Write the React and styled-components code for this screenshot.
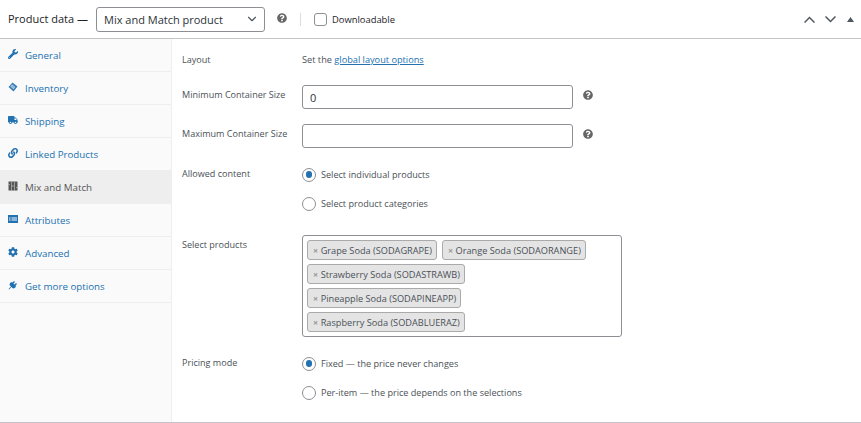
import React from 'react'
import styled, { createGlobalStyle } from 'styled-components'
import { FaWrench, FaTruck, FaLink, FaCog, FaQuestionCircle } from 'react-icons/fa'
import { FiChevronDown } from 'react-icons/fi'

const GlobalStyle = createGlobalStyle`
  html, body { margin:0; padding:0; background:#fff; }
  body { font-family:"Open Sans", "Noto Sans", sans-serif; font-size:10px; color:#4a5157; }
`

const Panel = styled.div`
  width:861px;
  height:422px;
  display:flex;
  flex-direction:column;
  border-bottom:1px solid #c3c4c7;
  overflow:hidden;
`
const Header = styled.div`
  height:38px;
  flex:none;
  display:flex;
  align-items:center;
  padding:0 0 0 8px;
  border-bottom:1px solid #c3c4c7;
`
const Title = styled.span`
  font-size:11px;
  font-weight:500;
  color:#1d2327;
  width:88px;
  margin-top:-2px;
`
const TypeSelect = styled.div`
  width:169px;
  height:25px;
  box-sizing:border-box;
  border:1px solid #8c8f94;
  border-radius:3px;
  display:flex;
  align-items:center;
  justify-content:space-between;
  padding:0 5px 0 7px;
  font-size:11px;
  color:#2c3338;
`
const HelpIcon = styled(FaQuestionCircle)`
  font-size:10px;
  color:#666;
  flex:none;
`
const HeaderHelp = styled(HelpIcon)`
  margin:-3px 0 0 12px;
`
const Divider = styled.span`
  width:1px;
  height:13px;
  background:#ddd;
  margin:0 13px 0 13px;
`
const CheckBox = styled.span`
  width:11px;
  height:11px;
  border:1px solid #8c8f94;
  border-radius:3px;
  margin-right:5px;
`
const CheckLabel = styled.span`
  font-size:9.4px;
  font-weight:500;
  color:#1d2327;
`
const Arrows = styled.div`
  margin-left:auto;
  display:flex;
  align-items:center;
  gap:10px;
  padding-right:7px;
  svg { display:block; }
  svg:last-child { margin-left:1px; }
`
const Body = styled.div`
  flex:1;
  display:flex;
  min-height:0;
`
const Sidebar = styled.ul`
  width:171px;
  flex:none;
  margin:0;
  padding:0;
  list-style:none;
  background:#fafafa;
  border-right:1px solid #eee;
`
const Tab = styled.li`
  height:33px;
  box-sizing:border-box;
  display:flex;
  align-items:center;
  gap:7px;
  padding:0 0 0 8px;
  border-bottom:1px solid #eee;
  background:${p => (p.$active ? '#eee' : 'transparent')};
  color:${p => (p.$active ? '#555' : '#2271b1')};
  font-size:9.75px;
  svg { width:10px; height:10px; flex:none; margin-top:-3px; }
`
const Main = styled.div`
  flex:1;
  padding:0 0 0 10px;
`
const Row = styled.div`
  display:flex;
  align-items:flex-start;
  height:${p => p.$h}px;
`
const Label = styled.div`
  width:120px;
  flex:none;
  font-size:9.05px;
  line-height:14px;
  padding-top:${p => p.$top || 0}px;
`
const Link = styled.a`
  color:#2271b1;
  text-decoration:underline;
`
const Note = styled.div`
  font-size:9.2px;
  line-height:14px;
  padding-top:${p => p.$top || 0}px;
`
const TextBox = styled.div`
  width:271px;
  height:24px;
  box-sizing:border-box;
  border:1px solid #8c8f94;
  border-radius:3px;
  padding:0 7px;
  display:flex;
  align-items:center;
  font-size:11px;
  color:#2c3338;
`
const RowHelp = styled(HelpIcon)`
  margin:5px 0 0 10px;
`
const Options = styled.div`
  display:flex;
  flex-direction:column;
  gap:14px;
  padding-top:${p => p.$top || 0}px;
`
const Option = styled.div`
  display:flex;
  align-items:center;
  gap:5px;
  height:15px;
  font-size:9.1px;
  span:last-child { margin-top:-1px; }
`
const Radio = styled.span`
  width:12px;
  height:12px;
  border:1px solid #8c8f94;
  border-radius:50%;
  display:flex;
  align-items:center;
  justify-content:center;
  flex:none;
  &::after {
    content:'';
    width:6.5px;
    height:6.5px;
    border-radius:50%;
    background:${p => (p.$on ? '#2271b1' : 'transparent')};
  }
`
const TokenBox = styled.div`
  width:320px;
  height:102px;
  box-sizing:border-box;
  border:1px solid #8c8f94;
  border-radius:3px;
  padding:4px 4px 0;
  display:flex;
  flex-wrap:wrap;
  align-content:flex-start;
  gap:4px 5px;
`
const Token = styled.span`
  height:20px;
  box-sizing:border-box;
  display:inline-flex;
  align-items:center;
  padding:0 4px 0 5px;
  background:#e4e4e4;
  border:1px solid #aaa;
  border-radius:3px;
  font-size:9.2px;
  white-space:nowrap;
  b { color:#999; font-weight:700; margin-right:2.5px; font-size:9px; }
`

const TagIcon = () => (
  <svg viewBox="0 0 20 20" fill="#2271b1"><path d="M9 1l10 8-8 10L1 10zM8 5l-3 4 6 5 3-4z" fillRule="evenodd" opacity=".9" /><path d="M8 6l5 4-2 3-5-4z" opacity=".55" /></svg>
)
const GridIcon = () => (
  <svg viewBox="0 0 20 20"><path fill="#555" d="M1 1h18v18H1z" /><path stroke="#bbb" strokeWidth="1.4" d="M7 1v18M13 1v18M7 10h6M1 7h3M16 13h3" /></svg>
)
const ListIcon = () => (
  <svg viewBox="0 0 20 20" fill="#2271b1"><path fillRule="evenodd" d="M0 2h20v16H0zM2 7v2h3V7zm5 0v2h11V7zm-5 4v2h3v-2zm5 0v2h11v-2z" /></svg>
)
const PlugIcon = () => (
  <svg viewBox="0 0 20 20" fill="#2271b1"><path d="M12 2l2 2-3 3 2 2 3-3 2 2-3 3 1 1-2 4-4 1-3-3-5 5-1-1 5-5-3-3 1-4 4-2 1 1z" /></svg>
)
const Chevron = ({ up }) => (
  <svg width="11" height="7" viewBox="0 0 11 7" fill="none" stroke="#50575e" strokeWidth="1.5">
    <path d={up ? 'M.5 6.5l5-5 5 5' : 'M.5 .5l5 5 5-5'} />
  </svg>
)
const tabs = [
  ['General', <FaWrench />],
  ['Inventory', <TagIcon />],
  ['Shipping', <FaTruck />],
  ['Linked Products', <FaLink />],
  ['Mix and Match', <GridIcon />, true],
  ['Attributes', <ListIcon />],
  ['Advanced', <FaCog />],
  ['Get more options', <PlugIcon />],
]
const products = [
  'Grape Soda (SODAGRAPE)',
  'Orange Soda (SODAORANGE)',
  'Strawberry Soda (SODASTRAWB)',
  'Pineapple Soda (SODAPINEAPP)',
  'Raspberry Soda (SODABLUERAZ)',
]

const App = () => (
  <>
    <GlobalStyle />
    <Panel>
      <Header>
        <Title>Product data —</Title>
        <TypeSelect>
          Mix and Match product
          <FiChevronDown size={14} color="#50575e" />
        </TypeSelect>
        <HeaderHelp />
        <Divider />
        <CheckBox />
        <CheckLabel>Downloadable</CheckLabel>
        <Arrows>
          <Chevron up />
          <Chevron />
          <svg width="7" height="5" viewBox="0 0 7 5" fill="#50575e"><path d="M3.5 0L7 5H0z" /></svg>
        </Arrows>
      </Header>
      <Body>
        <Sidebar>
          {tabs.map(([name, icon, active]) => (
            <Tab key={name} $active={active}>{icon}{name}</Tab>
          ))}
        </Sidebar>
        <Main>
          <Row $h={46}>
            <Label $top={14}>Layout</Label>
            <Note $top={14}>Set the <Link href="#">global layout options</Link></Note>
          </Row>
          <Row $h={39}>
            <Label $top={3}>Minimum Container Size</Label>
            <TextBox>0</TextBox>
            <RowHelp />
          </Row>
          <Row $h={40}>
            <Label $top={3}>Maximum Container Size</Label>
            <TextBox />
            <RowHelp />
          </Row>
          <Row $h={71}>
            <Label $top={3}>Allowed content</Label>
            <Options $top={3}>
              <Option><Radio $on /><span>Select individual products</span></Option>
              <Option><Radio /><span>Select product categories</span></Option>
            </Options>
          </Row>
          <Row $h={120}>
            <Label $top={3}>Select products</Label>
            <TokenBox>
              {products.map(p => <Token key={p}><b>×</b>{p}</Token>)}
            </TokenBox>
          </Row>
          <Row $h={50}>
            <Label $top={1}>Pricing mode</Label>
            <Options $top={1}>
              <Option><Radio $on /><span>Fixed — the price never changes</span></Option>
              <Option><Radio /><span>Per-item — the price depends on the selections</span></Option>
            </Options>
          </Row>
        </Main>
      </Body>
    </Panel>
  </>
)

export default App
